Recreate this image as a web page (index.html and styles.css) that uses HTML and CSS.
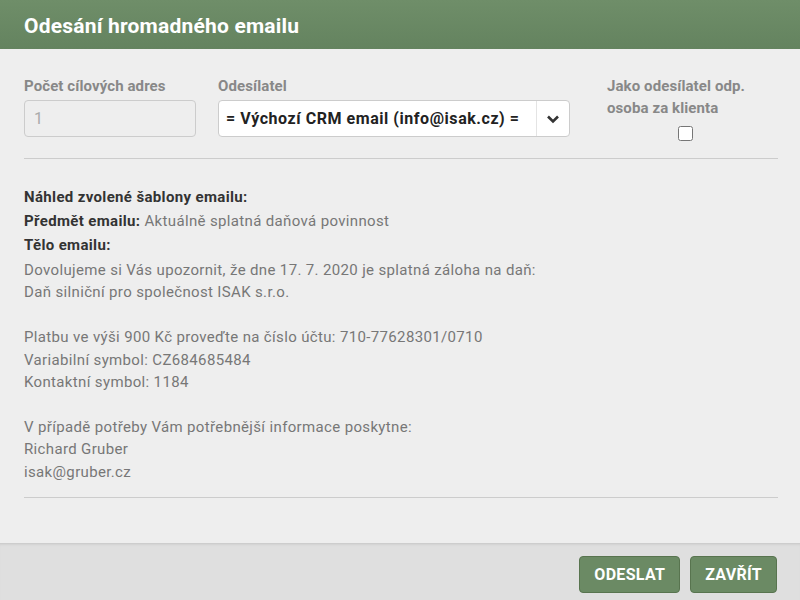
FILE: index.html
```html
<!DOCTYPE html>
<html>
<head>
  <meta charset="utf-8">
  <title>Odesání hromadného emailu</title>
  <link rel="stylesheet" href="styles.css">
</head>
<body>
  <div class="modal">
    <div class="modal-header">
      <h1 class="modal-title">Odesání hromadného emailu</h1>
    </div>

    <div class="modal-body">
      <div class="form-row">
        <div class="field field-count">
          <label for="count">Počet cílových adres</label>
          <input type="text" id="count" class="text-input" value="1" disabled>
        </div>

        <div class="field field-sender">
          <label for="sender">Odesílatel</label>
          <div class="select-box" id="sender">
            <span class="select-value">= Výchozí CRM email (info@isak.cz) =</span>
            <span class="select-arrow">
              <svg width="14" height="10" viewBox="0 0 14 10">
                <path d="M2 2.5 L7 7.5 L12 2.5" fill="none" stroke="#333" stroke-width="2.6"/>
              </svg>
            </span>
          </div>
        </div>

        <div class="field field-check">
          <label for="client">Jako odesílatel odp.<br>osoba za klienta</label>
          <input type="checkbox" id="client" class="check-input">
        </div>
      </div>

      <hr class="divider">

      <div class="preview">
        <div class="preview-head">Náhled zvolené šablony emailu:</div>
        <div class="preview-head"><b>Předmět emailu:</b> Aktuálně splatná daňová povinnost</div>
        <div class="preview-head"><b>Tělo emailu:</b></div>
        <div class="preview-text">
          Dovolujeme si Vás upozornit, že dne 17. 7. 2020 je splatná záloha na daň:<br>
          Daň silniční pro společnost ISAK s.r.o.<br>
          <br>
          Platbu ve výši 900 Kč proveďte na číslo účtu: 710-77628301/0710<br>
          Variabilní symbol: CZ684685484<br>
          Kontaktní symbol: 1184<br>
          <br>
          V případě potřeby Vám potřebnější informace poskytne:<br>
          Richard Gruber<br>
          isak@gruber.cz
        </div>
      </div>

      <hr class="divider divider-bottom">
    </div>

    <div class="modal-footer">
      <button type="button" class="btn">Odeslat</button>
      <button type="button" class="btn">Zavřít</button>
    </div>
  </div>
</body>
</html>
```

FILE: styles.css
```css
/* Modal layout */
body {
  margin: 0;
  font-family: Roboto, "Liberation Sans", sans-serif;
  font-size: 15px;
  letter-spacing: 0.35px;
  color: #333;
  background-color: #EEEEEE;
}

.modal {
  display: flex;
  flex-direction: column;
  height: 600px;
}

.modal-header {
  flex-shrink: 0;
  height: 49px;
  box-sizing: border-box;
  padding: 3px 24px 0 24px;
  display: flex;
  align-items: center;
  background: linear-gradient(#6F8E69, #64835F);
}

.modal-title {
  margin: 0;
  font-size: 21px;
  font-weight: bold;
  letter-spacing: 0.2px;
  color: #FFF;
}

.modal-body {
  flex: 1;
  padding: 26px 22px 0 24px;
  background-color: #EEEEEE;
}

/* Top form */
.form-row {
  display: flex;
}

.field label {
  display: block;
  font-size: 15px;
  font-weight: bold;
  letter-spacing: 0.1px;
  line-height: 22px;
  color: #888;
}

.field-count {
  width: 172px;
}

.field-sender {
  width: 352px;
  margin-left: 22px;
}

.field-check {
  width: 156px;
  margin-left: 37px;
}

.text-input {
  width: 100%;
  height: 37px;
  margin-top: 3px;
  padding: 0 9px;
  box-sizing: border-box;
  border: 1px solid #CCC;
  border-radius: 4px;
  background-color: #EEE;
  color: #AAA;
  font: inherit;
  font-size: 16px;
}

.select-box {
  display: flex;
  height: 37px;
  margin-top: 3px;
  box-sizing: border-box;
  border: 1px solid #CCC;
  border-radius: 4px;
  background-color: #FFF;
}

.select-value {
  flex: 1;
  display: flex;
  align-items: center;
  padding-left: 7px;
  font-size: 16px;
  font-weight: bold;
  letter-spacing: 0.55px;
  color: #222;
  white-space: nowrap;
}

.select-arrow {
  width: 32px;
  display: flex;
  align-items: center;
  justify-content: center;
  border-left: 1px solid #E4E4E4;
}

.check-input {
  display: block;
  width: 15px;
  height: 15px;
  margin: 7px auto 0 auto;
}

.divider {
  border: none;
  border-top: 1px solid #CCC;
  margin: 17px 0 0 0;
}

.divider-bottom {
  margin-top: 0;
}

/* Email preview */
.preview {
  padding: 26px 0 14px 0;
  color: #777;
}

.preview-head {
  line-height: 24px;
}

.preview-head:first-child,
.preview b {
  font-weight: bold;
  color: #333;
}

.preview-text {
  margin-top: 2px;
  line-height: 22.4px;
}

/* Footer */
.modal-footer {
  flex-shrink: 0;
  height: 57px;
  box-sizing: border-box;
  display: flex;
  justify-content: flex-end;
  align-items: flex-start;
  gap: 10px;
  padding: 13px 23px 0 0;
  background-color: #DFDFDF;
  box-shadow: inset 0 3px 3px -2px rgba(0, 0, 0, 0.12);
}

.btn {
  height: 37px;
  padding: 0 14px;
  border: 1px solid #58744F;
  border-radius: 4px;
  background-color: #6B8A64;
  color: #FFF;
  font-family: inherit;
  font-size: 16px;
  font-weight: bold;
  letter-spacing: 0.3px;
  text-transform: uppercase;
  cursor: pointer;
}
```
